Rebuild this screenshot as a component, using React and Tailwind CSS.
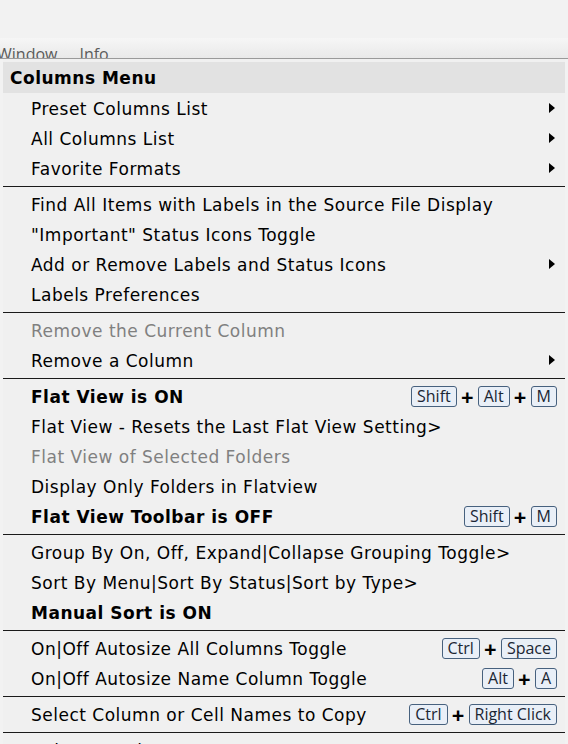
import React from 'react';

const sections = [
  [
    { label: 'Preset Columns List', sub: true },
    { label: 'All Columns List', sub: true },
    { label: 'Favorite Formats', sub: true },
  ],
  [
    { label: 'Find All Items with Labels in the Source File Display' },
    { label: '"Important" Status Icons Toggle' },
    { label: 'Add or Remove Labels and Status Icons', sub: true },
    { label: 'Labels Preferences' },
  ],
  [
    { label: 'Remove the Current Column', disabled: true },
    { label: 'Remove a Column', sub: true },
  ],
  [
    { label: 'Flat View is ON', bold: true, keys: ['Shift', 'Alt', 'M'] },
    { label: 'Flat View - Resets the Last Flat View Setting>' },
    { label: 'Flat View of Selected Folders', disabled: true },
    { label: 'Display Only Folders in Flatview' },
    { label: 'Flat View Toolbar is OFF', bold: true, keys: ['Shift', 'M'] },
  ],
  [
    { label: 'Group By On, Off, Expand|Collapse Grouping Toggle>' },
    { label: 'Sort By Menu|Sort By Status|Sort by Type>' },
    { label: 'Manual Sort is ON', bold: true },
  ],
  [
    { label: 'On|Off Autosize All Columns Toggle', keys: ['Ctrl', 'Space'] },
    { label: 'On|Off Autosize Name Column Toggle', keys: ['Alt', 'A'] },
  ],
  [
    { label: 'Select Column or Cell Names to Copy', keys: ['Ctrl', 'Right Click'] },
  ],
  [
    { label: 'Column Options' },
  ],
];

function Key({ children }) {
  return (
    <span className="h-[21px] px-[5px] flex items-center rounded-[3px] border border-[#47617e] bg-[#e9eff7] text-[16px] tracking-normal text-[#1b2633] font-['Open_Sans',sans-serif] leading-none">
      {children}
    </span>
  );
}

function Shortcut({ keys }) {
  return (
    <span className="flex items-center">
      {keys.map((k, i) => (
        <React.Fragment key={k}>
          {i > 0 && <span className="w-[21px] text-center text-[22px] font-bold leading-none tracking-normal font-['Open_Sans',sans-serif]">+</span>}
          <Key>{k}</Key>
        </React.Fragment>
      ))}
    </span>
  );
}

function Row({ item }) {
  return (
    <div className="h-[30px] flex items-center pl-[28px] pr-[8px]">
      <span
        className={`flex-1 pt-[4px] whitespace-nowrap ${item.bold ? 'font-bold' : ''} ${item.disabled ? 'text-[#808080]' : 'text-black'}`}
      >
        {item.label}
      </span>
      {item.sub && (
        <svg width="6" height="10" viewBox="0 0 6 10" className="mr-[2px]">
          <path d="M0 0 L6 5 L0 10 Z" fill="#000" />
        </svg>
      )}
      {item.keys && <Shortcut keys={item.keys} />}
    </div>
  );
}

export default function App() {
  return (
    <div className="w-[568px] h-[744px] overflow-hidden bg-[#f2f2f2] font-['DejaVu_Sans',Verdana,sans-serif] text-[17px] tracking-[0.5px]">
      <div className="h-[38px] bg-[#f2f2f2]" />
      {/* menubar */}
      <div className="h-[21px] bg-gradient-to-b from-[#f6f6f6] to-[#e9e9e9] border-b border-[#9a9a9a] overflow-hidden relative">
        <div className="absolute left-[-3px] top-[8px] flex gap-[22px] text-[#5a5a5a] text-[16px] tracking-normal leading-none font-['Open_Sans',sans-serif]">
          <span>Window</span>
          <span>Info</span>
        </div>
      </div>
      {/* menu */}
      <div className="ml-[3px] mr-[3px] pt-[3px] bg-[#f0f0f0]">
        <div className="h-[31px] pt-[3px] bg-[#e2e2e2] flex items-center pl-[7px] font-bold text-black">
          Columns Menu
        </div>
        {sections.map((sec, si) => (
          <div key={si}>
            {si > 0 && (
              <div className="h-[6px] flex items-center">
                <div className="h-px w-full bg-[#1a1a1a]" />
              </div>
            )}
            {sec.map((item) => (
              <Row key={item.label} item={item} />
            ))}
          </div>
        ))}
      </div>
    </div>
  );
}
